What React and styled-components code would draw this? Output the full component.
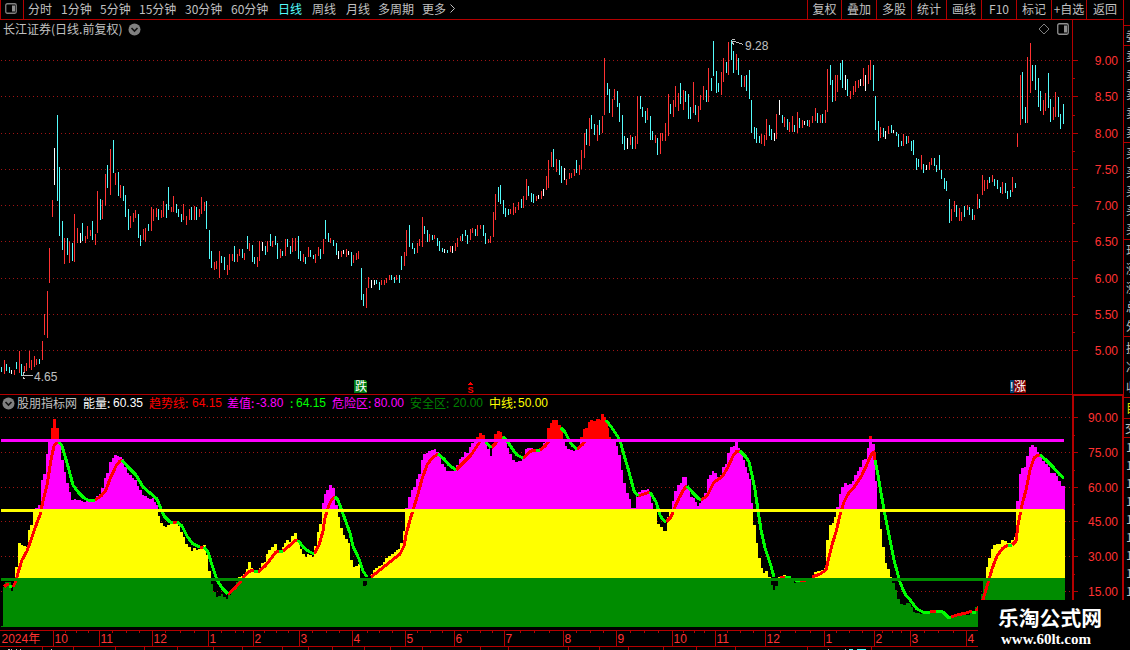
import React from "react";
import styled, { createGlobalStyle } from "styled-components";

const GlobalStyle = createGlobalStyle`
  body {
    margin: 0;
    background: #000;
    overflow: hidden;
  }
  * {
    box-sizing: border-box;
  }
  text {
    font-family: "Liberation Sans", "Noto Sans CJK SC", sans-serif;
    font-size: 12px;
  }
`;

const LINE = "#b40000";
const GRID = "#a01414";
const RED = "#ff3232";
const CYAN = "#54fcfc";
const GREY = "#c0c0c0";

const Page = styled.div`
  position: relative;
  width: 1130px;
  height: 650px;
  overflow: hidden;
  background: #000;
  color: ${GREY};
  font-family: "Noto Sans CJK SC", sans-serif;
  font-size: 12px;
  line-height: 18px;
  white-space: nowrap;
  display: grid;
  grid-template-columns: 1124px 6px;
`;

const Main = styled.div`
  display: flex;
  flex-direction: column;
  border-right: 1px solid ${LINE};
`;

const TopBar = styled.div`
  height: 20px;
  display: flex;
  border: solid ${LINE};
  border-width: 0 0 1px 1px;
`;

const Toggle = styled.div`
  width: 23px;
  padding: 3px 0 0 4px;
  border-right: 1px solid ${LINE};
  svg {
    display: block;
  }
`;

const Periods = styled.div`
  display: flex;
  flex: 1;
  padding-left: 4px;
`;

const Period = styled.div`
  width: ${(props) => props.$w}px;
  color: ${(props) => (props.$active ? CYAN : GREY)};
`;

const Actions = styled.div`
  display: grid;
  grid-template-columns: 34px 35px 35px 35px 35px 35px 35px 35px 37px;
`;

const Action = styled.div`
  border-left: 1px solid ${LINE};
  text-align: center;
  overflow: hidden;
`;

const Pane = styled.div`
  position: relative;
  height: ${(props) => props.$h}px;
`;

const Plot = styled.svg`
  position: absolute;
  left: 0;
  top: 0;
  display: block;
`;

const PaneHead = styled.div`
  position: relative;
  display: flex;
  align-items: center;
  height: ${(props) => props.$h}px;
  padding-left: ${(props) => props.$pad}px;
`;

const HeadIcons = styled.div`
  display: flex;
  align-items: center;
  gap: 7px;
  margin-left: auto;
  margin-right: 54px;
`;

const Title = styled.span`
  width: 125px;
`;

const IndicatorName = styled.span`
  width: 68px;
  padding-left: 2px;
`;

const Reading = styled.span`
  width: ${(props) => props.$w}px;
  display: flex;
  color: ${(props) => props.color};
`;

const ReadingLabel = styled.span`
  width: ${(props) => props.$w}px;
`;

const ReadingValue = styled.span`
  font-family: "Liberation Sans", sans-serif;
`;

const Side = styled.div`
  display: flex;
  flex-direction: column;
  padding-top: 25px;
  overflow: hidden;
`;

const SideGroup = styled.div`
  height: ${(props) => props.$h}px;
  flex-shrink: 0;
  border-top: 1px solid ${LINE};
  padding-left: ${(props) => props.$pad ?? 2}px;
  color: ${(props) => props.color || GREY};
  display: flex;
  flex-direction: column;
  justify-content: space-evenly;
  overflow: hidden;
`;

const Watermark = styled.div`
  position: absolute;
  left: 978px;
  top: 600px;
  width: 152px;
  height: 50px;
  padding: 5px 0 0 20px;
  background: #000;
  color: #fff;
`;

const SiteName = styled.div`
  font-size: 20.8px;
  font-weight: 700;
  line-height: 24px;
`;

const SiteUrl = styled.div`
  padding: 2px 0 0 3px;
  font: bold 15px/16px "Liberation Serif", serif;
`;

const periods = [
  ["分时", 33],
  ["1分钟", 39],
  ["5分钟", 39],
  ["15分钟", 46],
  ["30分钟", 46],
  ["60分钟", 47],
  ["日线", 34],
  ["周线", 34],
  ["月线", 32],
  ["多周期", 44],
  ["更多", 27],
];

const actions = ["复权", "叠加", "多股", "统计", "画线", "F10", "标记", "+自选", "返回"];

const readings = [
  ["能量:", "60.35", "#fff", 66, 30],
  ["趋势线:", "64.15", "#ff0000", 78, 43],
  ["差值:", "-3.80", "#ff00ff", 63, 29],
  [":", "64.15", "#00ff00", 42, 6],
  ["危险区:", "80.00", "#ff00ff", 78, 42],
  ["安全区:", "20.00", "#008000", 79, 43],
  ["中线:", "50.00", "#ffff00", 70, 29],
];

// x, high, low, colour (r up, c down, w flat)
const candles = `
1 367 372 c,4 360 374 r,6 364 371 c,9 367 373 c,11 370 374 w,14 370 375 r,16 362 369 c,19 351 373 r,21 364 376 c,24 366 372 r,
26 363 371 r,29 351 368 r,31 360 370 r,34 356 367 r,36 359 365 r,39 359 364 c,42 341 360 r,44 314 335 r,47 291 338 r,49 248 283 r,
52 200 217 r,54 148 185 w,57 115 201 c,59 167 236 c,62 221 250 c,64 238 264 r,67 238 255 c,69 241 263 r,72 243 261 c,74 214 262 r,
77 228 243 r,80 233 243 w,82 223 241 c,85 236 243 r,87 226 239 r,90 230 236 r,92 221 240 c,95 234 245 r,97 191 233 r,100 199 220 c,
102 200 219 r,105 174 206 r,107 165 188 c,110 149 195 r,113 140 173 c,115 173 185 r,118 172 196 c,120 185 198 r,123 186 201 c,125 195 217 c,
128 209 230 c,130 216 228 r,133 213 222 r,135 210 218 r,138 214 238 c,140 235 246 c,143 229 240 r,145 228 242 r,148 224 231 c,151 207 231 r,
153 209 221 r,156 208 217 r,158 209 220 c,161 210 218 r,163 201 217 r,166 204 218 c,168 187 210 c,171 207 212 r,173 196 212 r,176 204 213 c,
178 209 217 c,181 214 222 c,183 204 220 r,186 216 225 r,189 209 220 r,191 207 220 c,194 206 220 r,196 207 220 c,199 209 217 r,201 197 214 r,
204 202 211 r,206 201 229 c,209 230 259 c,211 251 268 c,214 262 270 r,216 261 269 r,219 251 278 r,221 256 263 c,224 257 270 c,227 265 275 r,
229 254 270 r,232 254 261 r,234 246 262 c,237 254 262 r,239 249 256 r,242 249 258 c,244 253 260 r,247 236 249 c,249 243 251 r,252 245 262 c,
254 257 264 c,257 257 267 r,259 241 261 r,262 242 251 w,265 246 255 c,267 241 252 r,270 234 246 c,272 241 247 r,275 236 245 c,277 243 259 c,
280 249 258 r,282 251 256 c,285 239 256 r,287 239 247 c,290 246 254 c,292 238 252 r,295 238 251 r,298 236 259 c,300 251 261 c,303 254 262 r,
305 257 264 c,308 247 257 r,310 250 257 c,313 255 259 c,315 254 263 r,318 247 256 r,320 249 259 c,323 239 254 r,325 220 239 c,328 233 242 c,
330 238 243 r,333 240 246 c,336 243 255 c,338 251 259 w,341 251 257 r,343 250 254 w,346 249 257 r,348 251 255 w,351 252 266 c,353 255 263 r,
356 253 260 r,358 251 259 r,361 268 300 c,363 294 306 c,366 288 308 r,368 277 288 r,371 280 288 w,374 280 285 w,376 280 284 c,379 282 290 c,
381 280 285 r,384 280 285 r,386 278 283 r,389 275 280 r,391 275 280 c,394 277 283 c,396 275 280 r,399 275 283 c,401 256 270 c,404 252 266 r,
406 230 256 r,409 225 247 c,412 243 249 c,414 248 254 c,417 243 253 r,419 239 246 r,422 217 247 r,424 226 234 c,427 230 242 c,429 234 242 r,
432 235 240 c,434 235 239 r,437 238 246 c,439 241 251 c,442 248 252 c,444 249 253 w,447 250 253 c,450 246 252 r,452 246 253 w,455 243 251 r,
457 238 247 r,460 236 241 r,462 234 241 c,465 230 236 c,467 235 244 c,470 229 240 r,472 228 233 r,475 229 236 c,477 225 236 r,480 225 229 r,
483 225 236 c,485 233 244 c,488 239 243 r,490 236 243 r,493 212 237 r,495 194 220 r,498 187 202 c,500 185 204 c,503 200 214 c,505 208 217 c,
508 209 215 c,510 209 214 r,513 203 215 r,515 207 213 r,518 202 210 r,521 199 208 c,523 196 208 r,526 179 200 r,528 186 196 c,531 193 202 c,
533 194 203 c,536 196 201 r,538 195 199 w,541 191 199 r,543 189 196 w,546 176 190 r,548 160 188 r,551 152 167 r,553 149 167 c,556 159 172 r,
559 160 175 c,561 166 183 c,564 168 180 w,566 179 185 r,569 173 179 r,571 173 178 r,574 169 176 r,576 160 173 c,579 165 175 r,581 150 169 r,
584 133 158 r,586 129 145 c,589 118 146 r,591 115 129 c,594 124 135 c,597 125 141 r,599 120 135 c,602 116 133 r,604 58 115 r,607 83 95 c,
609 89 113 c,612 99 117 r,614 89 100 r,617 91 107 c,619 103 122 c,622 115 144 c,624 136 150 c,627 138 149 w,630 135 145 r,632 137 149 c,
635 136 149 r,637 96 144 r,640 96 109 c,642 107 117 c,645 111 123 c,647 108 120 r,650 116 140 c,652 131 140 c,655 135 143 r,657 138 155 c,
660 133 154 r,662 133 141 r,665 123 141 r,668 94 136 r,670 104 114 c,673 100 117 r,675 86 107 r,678 93 111 r,680 83 104 c,683 90 110 r,
685 91 102 c,688 94 119 c,690 107 119 c,693 82 113 r,695 105 115 c,698 106 122 r,700 95 110 r,703 86 100 r,706 90 102 c,708 68 102 r,
711 78 91 c,713 41 76 c,716 71 93 c,718 83 92 c,721 72 95 r,723 58 82 r,726 62 73 c,728 42 75 r,731 40 60 c,733 51 73 c,
736 54 70 r,738 58 75 c,741 75 87 c,744 76 87 r,746 75 91 c,749 70 99 c,751 100 133 c,754 127 139 c,756 128 143 c,759 136 143 c,
761 134 144 r,764 135 146 r,766 119 140 r,769 125 136 c,771 129 140 c,774 133 141 w,776 114 139 r,779 100 115 w,782 115 123 c,784 117 127 r,
787 119 130 c,789 122 132 r,792 116 132 r,794 125 132 c,797 112 133 r,799 118 128 c,802 120 128 r,804 121 125 w,807 120 126 c,809 120 127 r,
812 116 123 r,815 108 121 r,817 113 123 c,820 115 123 r,822 114 123 c,825 110 123 r,827 69 112 r,830 65 85 c,832 80 102 c,835 75 101 r,
837 75 92 r,840 63 80 c,842 60 88 c,845 75 90 w,847 79 96 c,850 91 99 r,853 86 95 r,855 81 92 r,858 80 88 r,860 79 86 w,
863 68 86 r,865 75 91 w,868 65 84 r,870 60 80 r,873 65 91 c,875 96 130 c,878 121 141 c,880 127 138 r,883 128 137 c,885 131 139 w,
888 126 134 r,891 125 133 c,893 130 133 w,896 132 136 c,898 134 147 c,901 141 146 c,903 134 146 r,906 136 144 c,908 136 143 r,911 141 151 c,
913 140 155 c,916 158 170 c,918 159 167 c,921 155 169 r,923 164 173 c,926 165 170 w,929 162 170 r,931 158 165 r,934 158 166 c,936 165 172 c,
939 155 170 c,941 170 179 c,944 178 189 c,946 181 191 c,949 199 223 c,951 209 221 r,954 201 212 r,956 205 217 c,959 208 221 r,961 212 221 r,
964 206 217 c,967 205 210 r,969 207 215 c,972 209 220 c,974 215 220 r,977 194 209 r,979 199 208 c,982 175 195 r,984 180 191 r,987 180 189 r,
989 177 183 c,992 175 182 r,994 179 186 c,997 180 189 c,1000 187 193 c,1002 182 194 r,1005 183 193 c,1007 191 199 c,1010 190 197 c,1012 177 192 r,
1015 183 188 c,1017 133 147 r,1020 75 125 r,1022 72 119 c,1025 107 123 c,1027 57 123 r,1030 43 93 r,1032 65 81 c,1035 65 90 c,1038 78 107 c,
1040 91 111 c,1043 100 115 r,1045 93 111 r,1048 73 108 c,1050 99 122 c,1053 107 120 r,1055 92 117 r,1058 97 117 c,1060 114 129 c,1063 104 124 c`
  .trim()
  .split(",")
  .map((row) => row.trim().split(" "));

// start x, top y of every step of the energy histogram
const steps = `
3 587,5 582,11 591,13 584,15 567,18 543,21 545,23 546,26 547,28 530,30 525,33 510,35 508,38 505,41 480,43 474,46 454,48 439,
51 428,53 419,56 428,59 440,61 460,64 472,66 483,69 492,71 500,74 499,76 500,81 501,83 502,86 501,94 500,96 496,99 494,101 488,104 478,
106 473,109 462,112 458,114 455,117 456,119 457,122 459,124 467,127 473,129 475,132 478,134 480,137 486,139 490,142 495,144 496,147 498,
149 499,152 498,154 502,156 505,158 516,160 523,163 526,165 527,167 525,170 524,178 526,180 532,183 537,185 544,188 547,191 551,193 548,
196 550,198 549,200 548,203 545,206 555,208 571,211 584,213 592,216 597,218 596,221 594,223 597,226 599,228 595,231 589,233 587,236 582,
238 577,241 576,243 574,246 569,248 562,251 568,253 571,256 573,258 572,259 568,261 563,264 562,266 554,268 550,271 547,274 544,277 550,
279 553,282 547,284 543,286 540,289 542,291 536,294 533,297 540,299 544,300 549,302 554,305 557,307 554,309 555,312 557,314 546,317 532,
319 524,322 503,324 494,326 490,329 485,332 488,335 505,338 517,340 528,343 535,345 539,348 543,350 560,353 567,355 566,358 564,360 578,
363 586,366 585,367 578,371 574,373 570,375 568,378 566,381 565,383 562,385 558,388 556,391 554,394 552,396 550,398 549,400 543,403 531,
405 508,408 497,411 490,413 487,416 479,418 474,421 460,423 454,426 453,428 451,431 450,434 449,436 452,439 456,441 464,444 467,446 471,
454 469,456 465,459 459,461 457,464 452,466 453,469 447,471 443,474 442,476 437,479 433,482 435,485 443,487 449,490 456,492 446,494 434,
497 431,500 432,502 436,504 439,507 448,509 454,512 460,515 462,518 461,522 458,525 449,527 448,533 449,539 448,541 447,543 443,545 439,
547 428,550 423,552 420,558 425,561 430,563 439,565 446,567 449,570 450,573 451,575 450,578 446,580 437,583 429,585 428,588 422,590 420,
593 421,596 419,600 420,601 414,604 417,606 422,608 428,609 437,611 440,616 446,618 455,621 470,623 483,626 493,629 499,631 508,636 497,
638 492,641 490,647 489,649 493,651 503,653 512,657 524,660 527,663 531,667 517,669 512,672 501,674 491,677 485,680 483,682 477,687 488,
690 497,693 498,695 502,697 506,699 503,701 499,704 493,707 479,709 475,712 471,714 473,717 477,720 475,722 467,725 464,727 453,730 447,
733 446,735 441,738 448,740 453,743 460,745 467,747 473,749 479,751 503,753 525,756 543,758 558,761 568,763 573,765 571,768 577,771 585,
773 590,775 586,778 577,781 576,783 575,786 576,788 578,794 583,796 581,805 578,812 575,814 572,817 571,821 570,824 568,826 540,829 525,
832 523,834 517,836 507,839 494,841 487,844 483,847 485,849 484,852 481,854 475,857 471,859 467,862 460,864 459,867 448,869 436,872 444,
875 481,877 510,880 529,882 547,885 563,887 569,890 577,892 583,895 590,897 599,900 604,903 605,906 603,910 604,911 607,913 612,915 613,
920 614,922 612,926 613,945 616,947 619,949 617,953 616,960 615,970 613,975 607,978 603,981 594,983 580,986 567,988 558,991 549,993 545,
996 544,1001 540,1004 541,1007 543,1011 540,1014 537,1016 501,1019 474,1021 468,1024 467,1026 456,1029 447,1031 445,1034 447,1037 452,
1039 455,1042 461,1045 464,1048 467,1050 473,1056 476,1058 481,1061 486`
  .trim()
  .split(",")
  .map((row) => row.trim().split(" ").map(Number));

const stepPath =
  "M3 627" +
  steps
    .map(([x, y], i) => `V${y}H${i < steps.length - 1 ? steps[i + 1][0] : 1065}`)
    .join("") +
  "V627Z";

const trendUp = [
  "4,587 6,585 9,584",
  "13,587 16,581 18,573 22,560 27,551 31,540 35,528 40,515 43,501 47,485 51,460 54,446 57,442",
  "95,500 101,496 106,490 110,479 116,466 120,461 122,460",
  "173,522 177,522",
  "200,547 204,547",
  "228,594 235,588 241,581 247,573 252,570 254,571",
  "258,572 265,566 270,560 276,552 279,551",
  "283,551 289,546 296,540 298,540",
  "314,554 319,545 323,531 325,518 329,505 332,499 335,497",
  "371,577 380,570 390,562 400,554 404,546 406,535 410,520 414,507 418,494 422,479 427,465 432,458 438,454",
  "456,470 464,462 471,455 477,446 481,440",
  "491,448 496,443 498,440",
  "523,458 531,451 536,450",
  "540,450 545,446 549,441",
  "577,449 582,445 587,439",
  "638,496 644,494 650,492",
  "666,522 671,517 675,507 679,498 684,489 687,486",
  "701,500 707,496 714,482 722,477 728,467 733,456 737,451 740,451",
  "780,578 785,577",
  "812,577 820,574 826,570 828,561 832,545 836,532 840,515 844,502 848,494 855,486 862,475 868,462 872,453 874,452 875,460",
  "930,612 936,611",
  "951,617 957,615 966,613 972,611",
  "976,611 982,603 988,583 992,569 997,556 1003,548 1008,545",
  "1012,545 1016,541 1018,525 1022,505 1026,490 1030,470 1034,458 1038,455 1040,455",
];

const trendDown = [
  "9,586 12,586",
  "59,442 62,446 65,456 69,470 73,485 78,492 84,498 88,500 95,500",
  "122,460 128,467 136,475 143,487 150,493 157,499 161,509 164,516 170,522 173,523",
  "177,522 182,526 187,536 193,544 200,547",
  "204,547 208,552 212,565 217,580 222,588 228,594",
  "254,571 258,572",
  "279,551 283,551",
  "298,540 303,547 308,551 314,554",
  "335,497 338,500 342,511 346,522 350,533 353,546 359,559 363,571 367,577",
  "438,454 444,459 449,465 456,470",
  "486,442 491,448",
  "503,437 508,442 513,450 517,455 523,458",
  "536,450 540,450",
  "561,428 565,432 570,442 573,446 577,449",
  "606,420 612,428 618,437 621,444 624,455 629,472 634,491 638,496",
  "650,492 656,502 660,515 663,520 666,522",
  "687,486 693,493 699,499 701,500",
  "740,451 746,457 749,462 752,475 755,490 758,510 761,530 765,548 771,566 774,577",
  "785,577 791,578",
  "875,460 878,475 881,493 885,515 889,535 894,560 900,582 905,594 911,601 917,609 923,612 930,612",
  "936,611 943,612 948,617 951,617",
  "972,612 976,612",
  "1008,546 1012,545",
  "1040,455 1046,460 1053,467 1060,475 1064,478",
];

const priceScale = [
  [60, "9.00"],
  [96, "8.50"],
  [133, "8.00"],
  [169, "7.50"],
  [205, "7.00"],
  [241, "6.50"],
  [278, "6.00"],
  [314, "5.50"],
  [350, "5.00"],
];

const energyScale = [
  [417, "90.00"],
  [452, "75.00"],
  [487, "60.00"],
  [521, "45.00"],
  [556, "30.00"],
  [591, "15.00"],
];

const months = [
  [53, "10"],
  [99, "11"],
  [152, "12"],
  [208, "1"],
  [253, "2"],
  [299, "3"],
  [352, "4"],
  [405, "5"],
  [454, "6"],
  [504, "7"],
  [563, "8"],
  [616, "9"],
  [672, "10"],
  [715, "11"],
  [765, "12"],
  [824, "1"],
  [874, "2"],
  [910, "3"],
  [966, "4"],
];

const weekTicks = [
  65, 76, 88, 112, 126, 139, 165, 180, 194, 221, 235, 243, 264, 276, 288, 312,
  326, 339, 367, 379, 392, 417, 430, 442, 467, 480, 492, 520, 534, 549, 576,
  590, 603, 630, 644, 658, 683, 694, 704, 727, 740, 753, 780, 795, 810, 836,
  849, 862, 882, 892, 901, 924, 938, 953,
];

const lowerTicks = [
  42, 73, 115, 144, 177, 213, 242, 282, 308, 332, 364, 390, 422, 480, 508, 568,
  599, 628, 663, 696, 735, 807, 871,
];

const candleColor = { r: RED, c: CYAN, w: "#ffffff" };

const GridLine = ({ y }) => (
  <line x1="1" x2="1070" y1={y + 0.5} y2={y + 0.5} stroke={GRID} strokeDasharray="1 3" />
);

const Scale = ({ rows, minor }) => (
  <g>
    {rows.map(([y, label]) => (
      <g key={label}>
        <rect x="1072" y={y} width="6" height="1" fill={LINE} />
        <text x="1118" y={y + 5} textAnchor="end" fill={RED}>
          {label}
        </text>
      </g>
    ))}
    {minor.map((y) => (
      <rect key={y} x="1072" y={y} width="3" height="1" fill={LINE} />
    ))}
  </g>
);

const DropIcon = () => (
  <svg width="13" height="13">
    <circle cx="6.5" cy="6.5" r="6" fill="#808080" />
    <path d="M3.5 5l3 3 3-3" stroke="#101010" strokeWidth="1.6" fill="none" />
  </svg>
);

const PricePane = () => (
  <Pane $h={375}>
    <Plot width="1123" height="375" viewBox="0 20 1123 375" shapeRendering="crispEdges">
      {priceScale.map(([y]) => (
        <GridLine key={y} y={y} />
      ))}
      {candles.map(([x, high, low, c]) => (
        <rect key={x} x={x} y={high} width="1" height={low - high} fill={candleColor[c]} />
      ))}
      <rect x="1072" y="20" width="1" height="375" fill={LINE} />
      <rect x="0" y="394" width="1123" height="1" fill={LINE} />
      <Scale rows={priceScale} minor={[78, 115, 151, 187, 223, 260, 296, 332]} />
      <path d="M22 375.5H33M25 372.5H23V374.5M25 378.5H23V376.5" stroke={GREY} fill="none" />
      <text x="34" y="381" fill={GREY}>
        4.65
      </text>
      <path d="M731 41.5h4l4 1.5 4 1.5M732 39.5h3M732 42.5l2 2" stroke={GREY} fill="none" />
      <text x="745" y="50" fill={GREY}>
        9.28
      </text>
      <path d="M354 380h11l2 2v11h-13z" fill="#007a10" />
      <text x="355" y="391" fill="#fff">
        跌
      </text>
      <path d="M470.5 381.5l3 3.5h-6z" fill="#f00" />
      <text x="467.5" y="393" fill="#f00" style={{ fontSize: 9, fontWeight: 700 }}>
        S
      </text>
      <rect x="1010" y="380" width="5" height="13" fill="#004070" />
      <path d="M1014 380h10l2 2v11h-12z" fill="#800000" />
      <text x="1010" y="391" fill="#fff">
        !
      </text>
      <text x="1014" y="391" fill="#fff">
        涨
      </text>
    </Plot>
    <PaneHead $pad={3} $h={18}>
      <Title>长江证券(日线.前复权)</Title>
      <DropIcon />
      <HeadIcons>
        <svg width="12" height="12">
          <path d="M6 1l5 5-5 5-5-5z" stroke="#808080" fill="none" />
        </svg>
        <svg width="12" height="12">
          <rect x="0.75" y="0.75" width="10.5" height="10.5" rx="1.5" stroke="#909090" strokeWidth="1.3" fill="none" />
          <rect x="7" y="2.5" width="3" height="7" fill="#909090" />
        </svg>
      </HeadIcons>
    </PaneHead>
  </Pane>
);

const EnergyPane = () => (
  <Pane $h={255}>
    <Plot width="1123" height="255" viewBox="0 395 1123 255" shapeRendering="crispEdges">
      <defs>
        <clipPath id="energy">
          <path d={stepPath} />
        </clipPath>
      </defs>
      {energyScale.map(([y]) => (
        <GridLine key={y} y={y} />
      ))}
      <g clipPath="url(#energy)">
        <rect y="395" width="1072" height="44" fill="#ff0000" />
        <rect y="439" width="1072" height="71" fill="#ff00ff" />
        <rect y="510" width="1072" height="68" fill="#ffff00" />
        <rect y="578" width="1072" height="49" fill="#008c00" />
      </g>
      <rect x="1" y="626" width="3" height="1" fill="#008c00" />
      {trendUp.map((points) => (
        <polyline key={points} points={points} fill="none" stroke="#ff0000" strokeWidth="3" />
      ))}
      {trendDown.map((points) => (
        <polyline key={points} points={points} fill="none" stroke="#00ff00" strokeWidth="3" />
      ))}
      <rect x="1" y="439" width="1063" height="3" fill="#ff00ff" />
      <rect x="1" y="509" width="1063" height="3" fill="#ffff00" />
      <rect x="1" y="578" width="1063" height="3" fill="#008c00" />
      <rect x="795" y="581" width="5" height="1" fill="#00ff00" />
      <rect x="800" y="581" width="6" height="1" fill="#ff0000" />

      <rect x="1072" y="395" width="2" height="206" fill={LINE} />
      <rect x="1072" y="395" width="51" height="1" fill={LINE} />
      <rect x="1122" y="395" width="1" height="206" fill={LINE} />
      <Scale rows={energyScale} minor={[435, 470, 504, 539, 574]} />

      <rect x="0" y="630" width="978" height="1" fill={LINE} />
      <rect x="0" y="646" width="978" height="1" fill={LINE} />
      <text x="1.5" y="643" fill={RED}>
        2024年
      </text>
      {months.map(([x, label]) => (
        <g key={x}>
          <rect x={x} y="630" width="1" height="17" fill={LINE} />
          <text x={x + 1.5} y="643" fill={RED}>
            {label}
          </text>
        </g>
      ))}
      {weekTicks.map((x) => (
        <rect key={x} x={x} y="631" width="1" height="2" fill={LINE} />
      ))}
      {lowerTicks.map((x) => (
        <rect key={x} x={x} y="647" width="1" height="3" fill={LINE} />
      ))}
      <path d="M8 649.5h2M11 649.5h1M16 649.5h1M20 649.5h1M51 649.5h1M828 649.5h1M845 649.5h1" stroke={GREY} />
      <path d="M849 649.5h4M857 649.5h9" stroke={CYAN} />
    </Plot>
    <PaneHead $pad={2} $h={16}>
      <DropIcon />
      <IndicatorName>股朋指标网</IndicatorName>
      {readings.map(([label, value, color, w, lw]) => (
        <Reading key={label} color={color} $w={w}>
          <ReadingLabel $w={lw}>{label}</ReadingLabel>
          <ReadingValue>{value}</ReadingValue>
        </Reading>
      ))}
    </PaneHead>
  </Pane>
);

const sideGroups = [
  { h: 20, rows: ["委"] },
  { h: 97, rows: ["卖", "卖", "卖", "卖", "卖"] },
  { h: 97, rows: ["买", "买", "买", "买", "买"] },
  { h: 97, rows: ["现", "涨", "涨", "总", "外"] },
  { h: 61, rows: ["换", "净", "收"] },
  { h: 21, rows: ["目"], color: "#e0e000" },
  { h: 19, rows: ["交"], pad: 1 },
  { h: 163, rows: Array(9).fill("1") },
];

const App = () => {
  return (
    <Page>
      <GlobalStyle />
      <Main>
        <TopBar>
          <Toggle>
            <svg width="12" height="11">
              <rect x="0.75" y="0.75" width="10.5" height="9.5" rx="1.5" stroke="#808080" strokeWidth="1.3" fill="none" />
              <rect x="7" y="2.5" width="3" height="6" fill="#909090" />
            </svg>
          </Toggle>
          <Periods>
            {periods.map(([label, w]) => (
              <Period key={label} $w={w} $active={label === "日线"}>
                {label}
              </Period>
            ))}
            <svg width="8" height="18">
              <path d="M1.5 4.5l4 4-4 4" stroke={GREY} fill="none" />
            </svg>
          </Periods>
          <Actions>
            {actions.map((label) => (
              <Action key={label}>{label}</Action>
            ))}
          </Actions>
        </TopBar>
        <PricePane />
        <EnergyPane />
      </Main>
      <Side>
        {sideGroups.map(({ h, rows, color, pad }) => (
          <SideGroup key={rows[0]} $h={h} color={color} $pad={pad}>
            {rows.map((row, i) => (
              <span key={i}>{row}</span>
            ))}
          </SideGroup>
        ))}
      </Side>
      <Watermark>
        <SiteName>乐淘公式网</SiteName>
        <SiteUrl>www.60lt.com</SiteUrl>
      </Watermark>
    </Page>
  );
};

export default App;
